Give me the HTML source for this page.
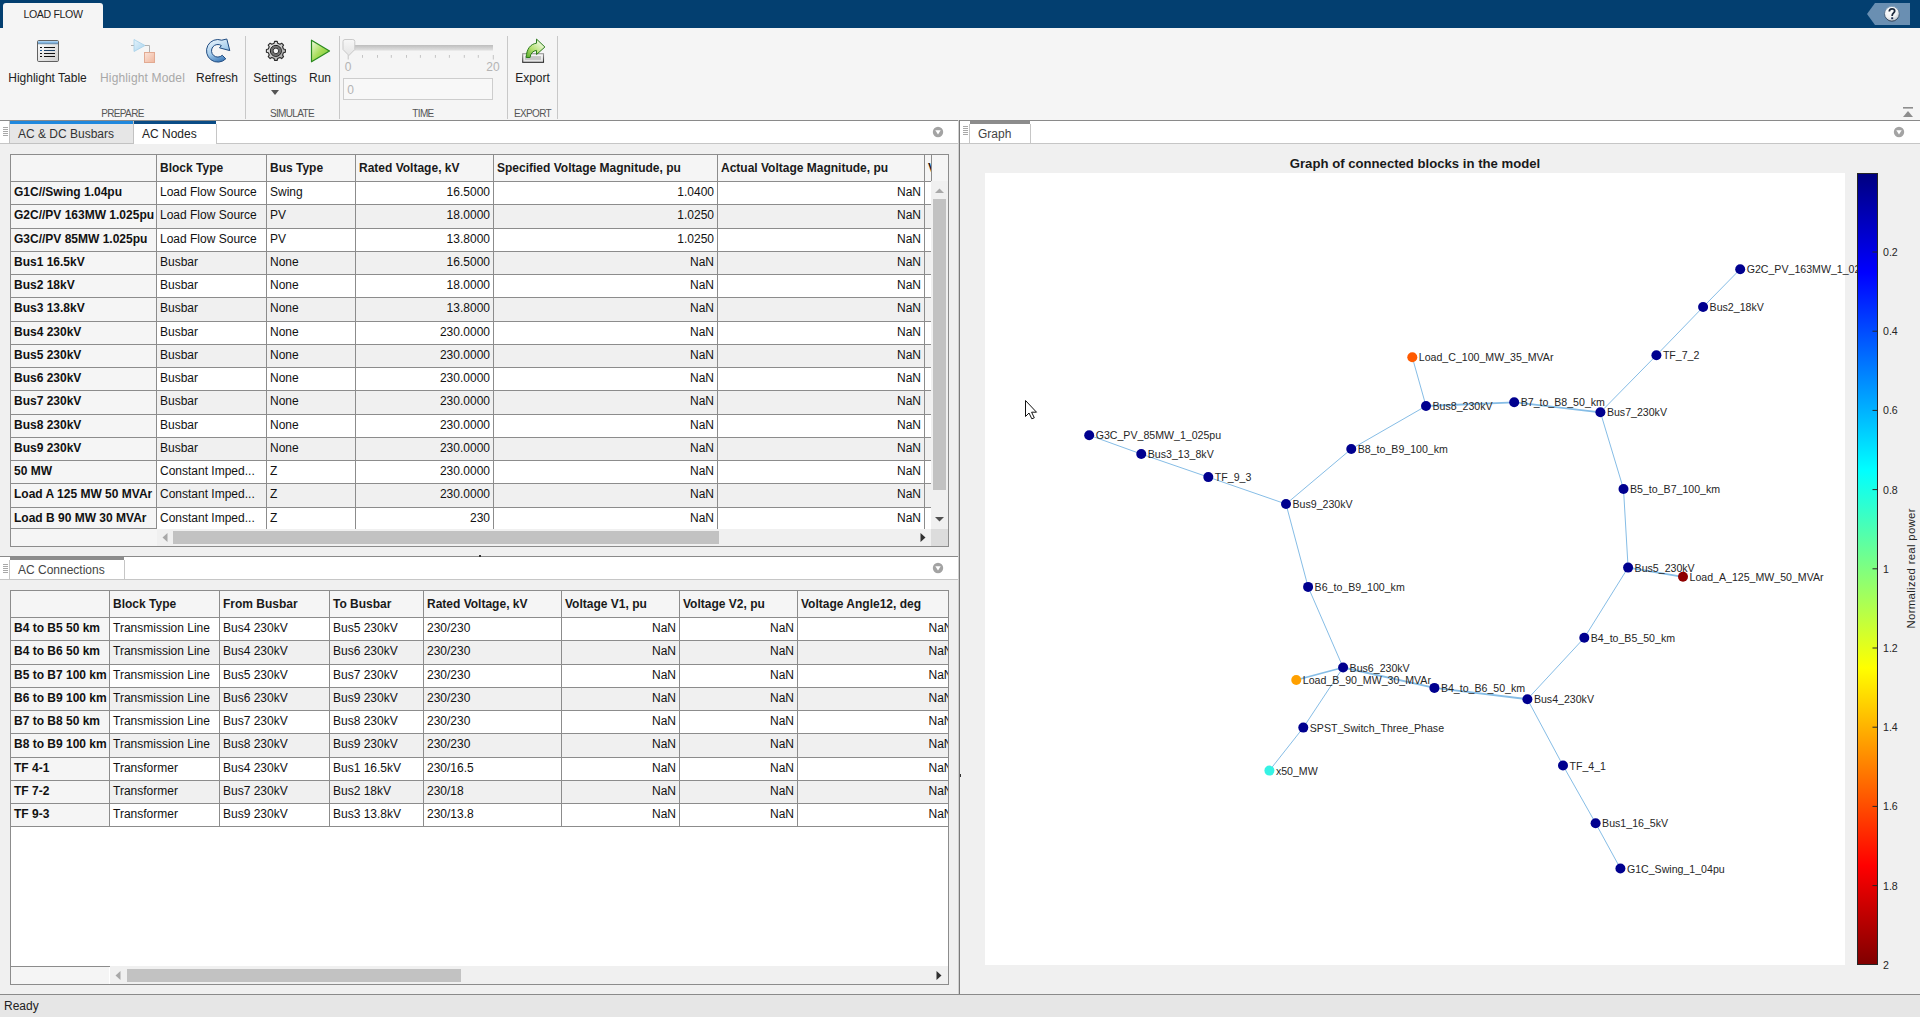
<!DOCTYPE html><html><head><meta charset="utf-8"><style>
html,body{margin:0;padding:0}
body{width:1920px;height:1017px;overflow:hidden;position:relative;background:#f0f0f0;font-family:"Liberation Sans",sans-serif}
.t{position:absolute;white-space:nowrap}
.r{position:absolute}
svg{position:absolute}
</style></head><body>

<div class="r" style="left:0px;top:0px;width:1920px;height:28px;background:#033f70;"></div>
<div class="r" style="left:3px;top:3px;width:100px;height:25px;background:#f5f5f5;border-radius:3px 3px 0 0"></div>
<div class="t" style="left:-247px;width:600px;text-align:center;top:9.03px;font-size:10.6px;line-height:10.6px;font-weight:400;color:#1e1e1e;letter-spacing:-0.35px">LOAD FLOW</div>
<svg style="left:1860px;top:0px" width="60" height="28">
<polygon points="7,14 15,3 50,3 50,25 15,25" fill="#6a8fb2"/>
<defs><radialGradient id="hg" cx="0.4" cy="0.3" r="0.75"><stop offset="0" stop-color="#ffffff"/><stop offset="0.6" stop-color="#f0f2f4"/><stop offset="1" stop-color="#b8c0c8"/></radialGradient>
<linearGradient id="hs" x1="0" y1="0" x2="0" y2="1"><stop offset="0" stop-color="#7a9ab8"/><stop offset="1" stop-color="#1e2e44"/></linearGradient></defs>
<circle cx="31.9" cy="13.75" r="7.4" fill="url(#hg)" stroke="url(#hs)" stroke-width="0.9"/>
<path d="M29.3,11.6 C29.3,9.6 30.6,8.9 32,8.9 C33.6,8.9 34.7,9.8 34.7,11.1 C34.7,12.6 32.3,13.2 32.2,15.3 L32.2,16" fill="none" stroke="#1e2a3c" stroke-width="1.75"/>
<rect x="31.2" y="17.3" width="2" height="1.9" fill="#1e3050"/>
</svg>
<div class="r" style="left:0px;top:28px;width:1920px;height:92px;background:#f5f5f5;"></div>
<div class="r" style="left:0px;top:120px;width:1920px;height:1px;background:#8a8a8a;"></div>
<div class="r" style="left:245px;top:36px;width:1px;height:83px;background:#c8c8c8;"></div>
<div class="r" style="left:339px;top:36px;width:1px;height:83px;background:#c8c8c8;"></div>
<div class="r" style="left:507px;top:36px;width:1px;height:83px;background:#c8c8c8;"></div>
<div class="r" style="left:557px;top:36px;width:1px;height:83px;background:#c8c8c8;"></div>
<div class="t" style="left:-252.5px;width:600px;text-align:center;top:71.84px;font-size:12px;line-height:12px;font-weight:400;color:#222;">Highlight Table</div>
<div class="t" style="left:-157.5px;width:600px;text-align:center;top:71.84px;font-size:12px;line-height:12px;font-weight:400;color:#a8a8a8;letter-spacing:0.15px">Highlight Model</div>
<div class="t" style="left:-83px;width:600px;text-align:center;top:71.84px;font-size:12px;line-height:12px;font-weight:400;color:#222;">Refresh</div>
<div class="t" style="left:-25px;width:600px;text-align:center;top:71.84px;font-size:12px;line-height:12px;font-weight:400;color:#222;">Settings</div>
<div class="t" style="left:20px;width:600px;text-align:center;top:71.84px;font-size:12px;line-height:12px;font-weight:400;color:#222;">Run</div>
<div class="t" style="left:232.5px;width:600px;text-align:center;top:71.84px;font-size:12px;line-height:12px;font-weight:400;color:#222;">Export</div>
<div class="t" style="left:-177.5px;width:600px;text-align:center;top:108.53px;font-size:10px;line-height:10px;font-weight:400;color:#555;letter-spacing:-0.65px">PREPARE</div>
<div class="t" style="left:-8px;width:600px;text-align:center;top:108.53px;font-size:10px;line-height:10px;font-weight:400;color:#555;letter-spacing:-0.65px">SIMULATE</div>
<div class="t" style="left:123px;width:600px;text-align:center;top:108.53px;font-size:10px;line-height:10px;font-weight:400;color:#555;letter-spacing:-0.65px">TIME</div>
<div class="t" style="left:232.5px;width:600px;text-align:center;top:108.53px;font-size:10px;line-height:10px;font-weight:400;color:#555;letter-spacing:-0.65px">EXPORT</div>
<svg style="left:270px;top:89px" width="10" height="8"><polygon points="1,1 9,1 5,6" fill="#555"/></svg>
<svg style="left:1900px;top:104px" width="16" height="16"><rect x="3" y="3" width="10" height="1.6" fill="#8e8e8e"/><polygon points="3,13 13,13 8,7" fill="#8e8e8e"/></svg>
<svg style="left:30px;top:32px" width="140" height="40">
<defs>
<linearGradient id="tb" x1="0" y1="0" x2="0" y2="1"><stop offset="0" stop-color="#b9dcf7"/><stop offset="1" stop-color="#5d9ad0"/></linearGradient>
<linearGradient id="bd" x1="0" y1="0" x2="1" y2="1"><stop offset="0" stop-color="#ffffff"/><stop offset="1" stop-color="#cfcfcf"/></linearGradient>
<linearGradient id="tri" x1="0" y1="0" x2="1" y2="1"><stop offset="0" stop-color="#e4f3fb"/><stop offset="1" stop-color="#a9d3ee"/></linearGradient>
<linearGradient id="sq" x1="0" y1="0" x2="1" y2="1"><stop offset="0" stop-color="#fbe3d8"/><stop offset="1" stop-color="#f0b79e"/></linearGradient>
</defs>
<rect x="7.5" y="8.5" width="21" height="21" rx="1.2" fill="url(#bd)" stroke="#505050" stroke-width="0.9"/>
<rect x="8" y="9" width="20" height="2.6" fill="url(#tb)"/>
<line x1="8" y1="11.8" x2="28" y2="11.8" stroke="#3d5f80" stroke-width="0.6"/>
<g stroke="#111" stroke-width="1">
<line x1="10" y1="15.5" x2="12" y2="15.5"/><line x1="14" y1="15.5" x2="25" y2="15.5"/>
<line x1="10" y1="18.5" x2="12" y2="18.5" stroke="#1a5a9a"/><line x1="14" y1="18.5" x2="25" y2="18.5" stroke="#1a3f66"/>
<line x1="10" y1="21.5" x2="12" y2="21.5"/><line x1="14" y1="21.5" x2="25" y2="21.5"/>
<line x1="10" y1="24.5" x2="12" y2="24.5"/><line x1="14" y1="24.5" x2="25" y2="24.5"/>
</g>
<line x1="101" y1="13.5" x2="104" y2="13.5" stroke="#b0b0b0" stroke-width="1"/>
<polyline points="115,13.5 119.5,13.5 119.5,20" fill="none" stroke="#b0b0b0" stroke-width="1"/>
<polygon points="104,7.5 115,13.5 104,19.5" fill="url(#tri)" stroke="#a3cfe9" stroke-width="0.8"/>
<rect x="114.5" y="20.5" width="10" height="10" fill="url(#sq)" stroke="#e2aa92" stroke-width="1"/>
</svg>
<svg style="left:200px;top:34px" width="36" height="32">
<defs><linearGradient id="rf" x1="0.2" y1="0" x2="0.6" y2="1"><stop offset="0" stop-color="#eef6fc"/><stop offset="0.55" stop-color="#a6cdec"/><stop offset="1" stop-color="#3a78b8"/></linearGradient></defs>
<path d="M21.7,6.2 A11.3,11.3 0 1 0 25.8,24.8 L22.25,21.25 A6.3,6.3 0 1 1 21.4,11.6 L19.5,13.8 L29.8,16.6 L26.8,5.0 Z" fill="url(#rf)" stroke="#1e4a80" stroke-width="1" stroke-linejoin="round"/>
</svg>
<svg style="left:262px;top:37px" width="28" height="28">
<defs><linearGradient id="gb" x1="0" y1="0" x2="1" y2="1"><stop offset="0" stop-color="#f2f2f2"/><stop offset="1" stop-color="#9c9c9c"/></linearGradient></defs>
<polygon points="12.08,6.32 12.55,4.40 15.25,4.40 15.72,6.32 17.98,7.25 19.66,6.22 21.58,8.14 20.55,9.82 21.48,12.08 23.40,12.55 23.40,15.25 21.48,15.72 20.55,17.98 21.58,19.66 19.66,21.58 17.98,20.55 15.72,21.48 15.25,23.40 12.55,23.40 12.08,21.48 9.82,20.55 8.14,21.58 6.22,19.66 7.25,17.98 6.32,15.72 4.40,15.25 4.40,12.55 6.32,12.08 7.25,9.82 6.22,8.14 8.14,6.22 9.82,7.25" fill="url(#gb)" stroke="#2a2a2a" stroke-width="1.1" stroke-linejoin="round"/>
<circle cx="13.9" cy="13.9" r="5.5" fill="#8c8c8c" stroke="#1a1a1a" stroke-width="1"/>
<circle cx="13.9" cy="13.9" r="4" fill="none" stroke="#5a5a5a" stroke-width="0.8"/>
<circle cx="13.9" cy="13.9" r="2.8" fill="#f6f6f6" stroke="#222" stroke-width="0.9"/>
</svg>
<svg style="left:306px;top:36px" width="30" height="30">
<defs><linearGradient id="rn" x1="0" y1="0" x2="1" y2="1"><stop offset="0" stop-color="#f2fbe4"/><stop offset="0.5" stop-color="#a9dd5a"/><stop offset="1" stop-color="#6cc22e"/></linearGradient></defs>
<polygon points="5.5,4.2 23.5,15 5.5,25.8" fill="url(#rn)" stroke="#2a8a1f" stroke-width="1.2" stroke-linejoin="round"/>
</svg>
<svg style="left:335px;top:0px" width="170" height="110">
<defs><linearGradient id="tr" x1="0" y1="0" x2="0" y2="1"><stop offset="0" stop-color="#bdbdbd"/><stop offset="1" stop-color="#e2e2e2"/></linearGradient>
<linearGradient id="th" x1="0" y1="0" x2="0" y2="1"><stop offset="0" stop-color="#f7f7f7"/><stop offset="1" stop-color="#e4e4e4"/></linearGradient></defs>
<rect x="13" y="45" width="145" height="5.6" fill="url(#tr)"/>
<line x1="13.2" y1="55" x2="13.2" y2="59.5" stroke="#c4c4c4" stroke-width="1"/><line x1="27.5" y1="55" x2="27.5" y2="57.8" stroke="#c4c4c4" stroke-width="1"/><line x1="42.5" y1="55" x2="42.5" y2="57.8" stroke="#c4c4c4" stroke-width="1"/><line x1="56.3" y1="55" x2="56.3" y2="57.8" stroke="#c4c4c4" stroke-width="1"/><line x1="71.5" y1="55" x2="71.5" y2="57.8" stroke="#c4c4c4" stroke-width="1"/><line x1="85.4" y1="55" x2="85.4" y2="57.8" stroke="#c4c4c4" stroke-width="1"/><line x1="100.4" y1="55" x2="100.4" y2="57.8" stroke="#c4c4c4" stroke-width="1"/><line x1="114.4" y1="55" x2="114.4" y2="57.8" stroke="#c4c4c4" stroke-width="1"/><line x1="129.3" y1="55" x2="129.3" y2="57.8" stroke="#c4c4c4" stroke-width="1"/><line x1="143.3" y1="55" x2="143.3" y2="57.8" stroke="#c4c4c4" stroke-width="1"/><line x1="158.3" y1="55" x2="158.3" y2="59.5" stroke="#c4c4c4" stroke-width="1"/>
<path d="M8,41.5 Q8,39.5 10,39.5 L17.8,39.5 Q19.8,39.5 19.8,41.5 L19.8,49.5 L13.9,55.5 L8,49.5 Z" fill="url(#th)" stroke="#c9c9c9" stroke-width="1"/>
<text x="13" y="71" text-anchor="middle" font-family="Liberation Sans" font-size="12" fill="#b4b4b4">0</text>
<text x="158" y="71" text-anchor="middle" font-family="Liberation Sans" font-size="12" fill="#b4b4b4">20</text>
<rect x="8.5" y="78.5" width="149" height="21" fill="#f8f8f8" stroke="#cdcdcd" stroke-width="1"/>
<text x="15.5" y="94" text-anchor="middle" font-family="Liberation Sans" font-size="12" fill="#b4b4b4">0</text>
</svg>
<svg style="left:515px;top:35px" width="36" height="32">
<defs><linearGradient id="ex" x1="0.1" y1="1" x2="0.8" y2="0.2"><stop offset="0" stop-color="#5fb030"/><stop offset="0.45" stop-color="#b4e070"/><stop offset="1" stop-color="#eef9dc"/></linearGradient>
<linearGradient id="ext" x1="0" y1="0" x2="0" y2="1"><stop offset="0" stop-color="#f8f8f8"/><stop offset="1" stop-color="#e0e0e0"/></linearGradient>
<linearGradient id="exs" x1="0" y1="0" x2="0" y2="1"><stop offset="0" stop-color="#9a9a9a"/><stop offset="1" stop-color="#2a2a2a"/></linearGradient></defs>
<rect x="7.7" y="18.7" width="20.8" height="8.6" fill="url(#ext)" stroke="url(#exs)" stroke-width="1.1"/>
<rect x="10" y="21.1" width="16" height="3.8" fill="#c6c6c6"/>
<path d="M21.55,4.1 L29.9,12 L21.55,19.5 L21.5,15.4 C18,15.8 15.3,18.5 15.1,22.5 L11.2,22.5 C11.5,14 15.5,9 21.5,8.2 Z" fill="url(#ex)" stroke="#2a7a1a" stroke-width="1" stroke-linejoin="miter"/>
</svg>
<div class="r" style="left:0px;top:121px;width:958px;height:23px;background:#ffffff;"></div>
<div class="r" style="left:0px;top:143px;width:958px;height:1px;background:#c6c6c6;"></div>
<div class="r" style="left:3px;top:127px;width:5px;height:1px;background:#a8a8a8;"></div><div class="r" style="left:3px;top:129px;width:5px;height:1px;background:#a8a8a8;"></div><div class="r" style="left:3px;top:131px;width:5px;height:1px;background:#a8a8a8;"></div><div class="r" style="left:3px;top:133px;width:5px;height:1px;background:#a8a8a8;"></div><div class="r" style="left:3px;top:135px;width:5px;height:1px;background:#a8a8a8;"></div>
<div class="r" style="left:9px;top:121px;width:125px;height:23px;background:#c2c2c2;"></div>
<div class="r" style="left:10px;top:121px;width:123px;height:22px;background:#e6e6e6;"></div>
<div class="r" style="left:10px;top:121px;width:123px;height:3px;background:#1f88dd;"></div>
<div class="t" style="left:18px;top:127.84px;font-size:12px;line-height:12px;font-weight:400;color:#333;">AC &amp; DC Busbars</div>
<div class="r" style="left:134px;top:121px;width:82px;height:23px;background:#ffffff;"></div>
<div class="r" style="left:134px;top:121px;width:82px;height:3px;background:#0a4c86;"></div>
<div class="r" style="left:216px;top:124px;width:1px;height:20px;background:#c6c6c6;"></div>
<div class="t" style="left:142px;top:127.84px;font-size:12px;line-height:12px;font-weight:400;color:#222;">AC Nodes</div>
<svg style="left:931px;top:125px" width="14" height="14"><circle cx="7" cy="7" r="5.2" fill="#a3a3a3"/><polygon points="4.3,5.3 9.7,5.3 7,9.6" fill="#fff"/></svg>
<div class="r" style="left:0px;top:556px;width:958px;height:1px;background:#8a8a8a;"></div>
<div class="r" style="left:0px;top:557px;width:958px;height:22px;background:#ffffff;"></div>
<div class="r" style="left:0px;top:579px;width:958px;height:1px;background:#c6c6c6;"></div>
<div class="r" style="left:3px;top:564px;width:5px;height:1px;background:#a8a8a8;"></div><div class="r" style="left:3px;top:566px;width:5px;height:1px;background:#a8a8a8;"></div><div class="r" style="left:3px;top:568px;width:5px;height:1px;background:#a8a8a8;"></div><div class="r" style="left:3px;top:570px;width:5px;height:1px;background:#a8a8a8;"></div><div class="r" style="left:3px;top:572px;width:5px;height:1px;background:#a8a8a8;"></div>
<div class="r" style="left:10px;top:557px;width:114px;height:3px;background:#8c8c8c;"></div>
<div class="r" style="left:124px;top:560px;width:1px;height:20px;background:#c6c6c6;"></div>
<div class="r" style="left:9px;top:560px;width:1px;height:20px;background:#c6c6c6;"></div>
<div class="t" style="left:18px;top:563.84px;font-size:12px;line-height:12px;font-weight:400;color:#444;">AC Connections</div>
<svg style="left:931px;top:561px" width="14" height="14"><circle cx="7" cy="7" r="5.2" fill="#a3a3a3"/><polygon points="4.3,5.3 9.7,5.3 7,9.6" fill="#fff"/></svg>
<div class="r" style="left:958px;top:120px;width:1px;height:874px;background:#d0d0d0;"></div>
<div class="r" style="left:959px;top:120px;width:1px;height:874px;background:#7a7a7a;"></div>
<div class="r" style="left:960px;top:121px;width:960px;height:22px;background:#ffffff;"></div>
<div class="r" style="left:960px;top:143px;width:960px;height:1px;background:#c6c6c6;"></div>
<div class="r" style="left:963px;top:126px;width:5px;height:1px;background:#a8a8a8;"></div><div class="r" style="left:963px;top:128px;width:5px;height:1px;background:#a8a8a8;"></div><div class="r" style="left:963px;top:130px;width:5px;height:1px;background:#a8a8a8;"></div><div class="r" style="left:963px;top:132px;width:5px;height:1px;background:#a8a8a8;"></div><div class="r" style="left:963px;top:134px;width:5px;height:1px;background:#a8a8a8;"></div>
<div class="r" style="left:970px;top:121px;width:60px;height:3px;background:#8c8c8c;"></div>
<div class="r" style="left:1030px;top:124px;width:1px;height:20px;background:#c6c6c6;"></div>
<div class="r" style="left:969px;top:124px;width:1px;height:20px;background:#c6c6c6;"></div>
<div class="t" style="left:978px;top:127.84px;font-size:12px;line-height:12px;font-weight:400;color:#444;">Graph</div>
<svg style="left:1892px;top:125px" width="14" height="14"><circle cx="7" cy="7" r="5.2" fill="#a3a3a3"/><polygon points="4.3,5.3 9.7,5.3 7,9.6" fill="#fff"/></svg>
<div class="r" style="left:479px;top:555px;width:2px;height:2px;background:#333;"></div>
<div class="r" style="left:960px;top:774px;width:1px;height:3px;background:#333;"></div>
<div class="r" style="left:0px;top:994px;width:1920px;height:1px;background:#8a8a8a;"></div>
<div class="r" style="left:0px;top:995px;width:1920px;height:22px;background:#e6e6e6;"></div>
<div class="t" style="left:4px;top:999.84px;font-size:12px;line-height:12px;font-weight:400;color:#222;">Ready</div>
<div class="r" style="left:0;top:0;width:1920px;height:1017px;clip-path:inset(154px 972px 471px 10px)">
<div class="r" style="left:10px;top:154px;width:938px;height:27px;background:#f5f5f5;"></div>
<div class="r" style="left:156px;top:181px;width:775px;height:23px;background:#ffffff;"></div>
<div class="r" style="left:10px;top:181px;width:146px;height:23px;background:#f5f5f5;"></div>
<div class="r" style="left:156px;top:204px;width:775px;height:24px;background:#f0f0f0;"></div>
<div class="r" style="left:10px;top:204px;width:146px;height:24px;background:#f5f5f5;"></div>
<div class="r" style="left:156px;top:228px;width:775px;height:23px;background:#ffffff;"></div>
<div class="r" style="left:10px;top:228px;width:146px;height:23px;background:#f5f5f5;"></div>
<div class="r" style="left:156px;top:251px;width:775px;height:23px;background:#f0f0f0;"></div>
<div class="r" style="left:10px;top:251px;width:146px;height:23px;background:#f5f5f5;"></div>
<div class="r" style="left:156px;top:274px;width:775px;height:23px;background:#ffffff;"></div>
<div class="r" style="left:10px;top:274px;width:146px;height:23px;background:#f5f5f5;"></div>
<div class="r" style="left:156px;top:297px;width:775px;height:24px;background:#f0f0f0;"></div>
<div class="r" style="left:10px;top:297px;width:146px;height:24px;background:#f5f5f5;"></div>
<div class="r" style="left:156px;top:321px;width:775px;height:23px;background:#ffffff;"></div>
<div class="r" style="left:10px;top:321px;width:146px;height:23px;background:#f5f5f5;"></div>
<div class="r" style="left:156px;top:344px;width:775px;height:23px;background:#f0f0f0;"></div>
<div class="r" style="left:10px;top:344px;width:146px;height:23px;background:#f5f5f5;"></div>
<div class="r" style="left:156px;top:367px;width:775px;height:23px;background:#ffffff;"></div>
<div class="r" style="left:10px;top:367px;width:146px;height:23px;background:#f5f5f5;"></div>
<div class="r" style="left:156px;top:390px;width:775px;height:24px;background:#f0f0f0;"></div>
<div class="r" style="left:10px;top:390px;width:146px;height:24px;background:#f5f5f5;"></div>
<div class="r" style="left:156px;top:414px;width:775px;height:23px;background:#ffffff;"></div>
<div class="r" style="left:10px;top:414px;width:146px;height:23px;background:#f5f5f5;"></div>
<div class="r" style="left:156px;top:437px;width:775px;height:23px;background:#f0f0f0;"></div>
<div class="r" style="left:10px;top:437px;width:146px;height:23px;background:#f5f5f5;"></div>
<div class="r" style="left:156px;top:460px;width:775px;height:23px;background:#ffffff;"></div>
<div class="r" style="left:10px;top:460px;width:146px;height:23px;background:#f5f5f5;"></div>
<div class="r" style="left:156px;top:483px;width:775px;height:24px;background:#f0f0f0;"></div>
<div class="r" style="left:10px;top:483px;width:146px;height:24px;background:#f5f5f5;"></div>
<div class="r" style="left:156px;top:507px;width:775px;height:22px;background:#ffffff;"></div>
<div class="r" style="left:10px;top:507px;width:146px;height:22px;background:#f5f5f5;"></div>
<div class="r" style="left:10px;top:204px;width:921px;height:1px;background:#8c8c8c;"></div>
<div class="r" style="left:10px;top:228px;width:921px;height:1px;background:#8c8c8c;"></div>
<div class="r" style="left:10px;top:251px;width:921px;height:1px;background:#8c8c8c;"></div>
<div class="r" style="left:10px;top:274px;width:921px;height:1px;background:#8c8c8c;"></div>
<div class="r" style="left:10px;top:297px;width:921px;height:1px;background:#8c8c8c;"></div>
<div class="r" style="left:10px;top:321px;width:921px;height:1px;background:#8c8c8c;"></div>
<div class="r" style="left:10px;top:344px;width:921px;height:1px;background:#8c8c8c;"></div>
<div class="r" style="left:10px;top:367px;width:921px;height:1px;background:#8c8c8c;"></div>
<div class="r" style="left:10px;top:390px;width:921px;height:1px;background:#8c8c8c;"></div>
<div class="r" style="left:10px;top:414px;width:921px;height:1px;background:#8c8c8c;"></div>
<div class="r" style="left:10px;top:437px;width:921px;height:1px;background:#8c8c8c;"></div>
<div class="r" style="left:10px;top:460px;width:921px;height:1px;background:#8c8c8c;"></div>
<div class="r" style="left:10px;top:483px;width:921px;height:1px;background:#8c8c8c;"></div>
<div class="r" style="left:10px;top:507px;width:921px;height:1px;background:#8c8c8c;"></div>
<div class="r" style="left:156px;top:154px;width:1px;height:375px;background:#8c8c8c;"></div>
<div class="r" style="left:266px;top:154px;width:1px;height:375px;background:#8c8c8c;"></div>
<div class="r" style="left:355px;top:154px;width:1px;height:375px;background:#8c8c8c;"></div>
<div class="r" style="left:493px;top:154px;width:1px;height:375px;background:#8c8c8c;"></div>
<div class="r" style="left:717px;top:154px;width:1px;height:375px;background:#8c8c8c;"></div>
<div class="r" style="left:924px;top:154px;width:1px;height:375px;background:#8c8c8c;"></div>
<div class="r" style="left:931px;top:154px;width:1px;height:27px;background:#8c8c8c;"></div>
<div class="r" style="left:10px;top:181px;width:921px;height:1px;background:#8c8c8c;"></div>
<div class="t" style="left:160px;top:161.84px;font-size:12px;line-height:12px;font-weight:700;color:#1a1a1a;">Block Type</div>
<div class="t" style="left:270px;top:161.84px;font-size:12px;line-height:12px;font-weight:700;color:#1a1a1a;">Bus Type</div>
<div class="t" style="left:359px;top:161.84px;font-size:12px;line-height:12px;font-weight:700;color:#1a1a1a;">Rated Voltage, kV</div>
<div class="t" style="left:497px;top:161.84px;font-size:12px;line-height:12px;font-weight:700;color:#1a1a1a;">Specified Voltage Magnitude, pu</div>
<div class="t" style="left:721px;top:161.84px;font-size:12px;line-height:12px;font-weight:700;color:#1a1a1a;">Actual Voltage Magnitude, pu</div>
<div class="t" style="left:928px;top:161.84px;font-size:12px;line-height:12px;font-weight:700;color:#1a1a1a;">V</div>
<div class="t" style="left:14px;top:185.84px;font-size:12px;line-height:12px;font-weight:700;color:#111;">G1C//Swing 1.04pu</div>
<div class="t" style="left:160px;top:185.84px;font-size:12px;line-height:12px;font-weight:400;color:#111;">Load Flow Source</div>
<div class="t" style="left:270px;top:185.84px;font-size:12px;line-height:12px;font-weight:400;color:#111;">Swing</div>
<div class="t" style="left:-110px;width:600px;text-align:right;top:185.84px;font-size:12px;line-height:12px;font-weight:400;color:#111;">16.5000</div>
<div class="t" style="left:114px;width:600px;text-align:right;top:185.84px;font-size:12px;line-height:12px;font-weight:400;color:#111;">1.0400</div>
<div class="t" style="left:321px;width:600px;text-align:right;top:185.84px;font-size:12px;line-height:12px;font-weight:400;color:#111;">NaN</div>
<div class="t" style="left:14px;top:208.84px;font-size:12px;line-height:12px;font-weight:700;color:#111;">G2C//PV 163MW 1.025pu</div>
<div class="t" style="left:160px;top:208.84px;font-size:12px;line-height:12px;font-weight:400;color:#111;">Load Flow Source</div>
<div class="t" style="left:270px;top:208.84px;font-size:12px;line-height:12px;font-weight:400;color:#111;">PV</div>
<div class="t" style="left:-110px;width:600px;text-align:right;top:208.84px;font-size:12px;line-height:12px;font-weight:400;color:#111;">18.0000</div>
<div class="t" style="left:114px;width:600px;text-align:right;top:208.84px;font-size:12px;line-height:12px;font-weight:400;color:#111;">1.0250</div>
<div class="t" style="left:321px;width:600px;text-align:right;top:208.84px;font-size:12px;line-height:12px;font-weight:400;color:#111;">NaN</div>
<div class="t" style="left:14px;top:232.84px;font-size:12px;line-height:12px;font-weight:700;color:#111;">G3C//PV 85MW 1.025pu</div>
<div class="t" style="left:160px;top:232.84px;font-size:12px;line-height:12px;font-weight:400;color:#111;">Load Flow Source</div>
<div class="t" style="left:270px;top:232.84px;font-size:12px;line-height:12px;font-weight:400;color:#111;">PV</div>
<div class="t" style="left:-110px;width:600px;text-align:right;top:232.84px;font-size:12px;line-height:12px;font-weight:400;color:#111;">13.8000</div>
<div class="t" style="left:114px;width:600px;text-align:right;top:232.84px;font-size:12px;line-height:12px;font-weight:400;color:#111;">1.0250</div>
<div class="t" style="left:321px;width:600px;text-align:right;top:232.84px;font-size:12px;line-height:12px;font-weight:400;color:#111;">NaN</div>
<div class="t" style="left:14px;top:255.84px;font-size:12px;line-height:12px;font-weight:700;color:#111;">Bus1 16.5kV</div>
<div class="t" style="left:160px;top:255.84px;font-size:12px;line-height:12px;font-weight:400;color:#111;">Busbar</div>
<div class="t" style="left:270px;top:255.84px;font-size:12px;line-height:12px;font-weight:400;color:#111;">None</div>
<div class="t" style="left:-110px;width:600px;text-align:right;top:255.84px;font-size:12px;line-height:12px;font-weight:400;color:#111;">16.5000</div>
<div class="t" style="left:114px;width:600px;text-align:right;top:255.84px;font-size:12px;line-height:12px;font-weight:400;color:#111;">NaN</div>
<div class="t" style="left:321px;width:600px;text-align:right;top:255.84px;font-size:12px;line-height:12px;font-weight:400;color:#111;">NaN</div>
<div class="t" style="left:14px;top:278.84px;font-size:12px;line-height:12px;font-weight:700;color:#111;">Bus2 18kV</div>
<div class="t" style="left:160px;top:278.84px;font-size:12px;line-height:12px;font-weight:400;color:#111;">Busbar</div>
<div class="t" style="left:270px;top:278.84px;font-size:12px;line-height:12px;font-weight:400;color:#111;">None</div>
<div class="t" style="left:-110px;width:600px;text-align:right;top:278.84px;font-size:12px;line-height:12px;font-weight:400;color:#111;">18.0000</div>
<div class="t" style="left:114px;width:600px;text-align:right;top:278.84px;font-size:12px;line-height:12px;font-weight:400;color:#111;">NaN</div>
<div class="t" style="left:321px;width:600px;text-align:right;top:278.84px;font-size:12px;line-height:12px;font-weight:400;color:#111;">NaN</div>
<div class="t" style="left:14px;top:301.84px;font-size:12px;line-height:12px;font-weight:700;color:#111;">Bus3 13.8kV</div>
<div class="t" style="left:160px;top:301.84px;font-size:12px;line-height:12px;font-weight:400;color:#111;">Busbar</div>
<div class="t" style="left:270px;top:301.84px;font-size:12px;line-height:12px;font-weight:400;color:#111;">None</div>
<div class="t" style="left:-110px;width:600px;text-align:right;top:301.84px;font-size:12px;line-height:12px;font-weight:400;color:#111;">13.8000</div>
<div class="t" style="left:114px;width:600px;text-align:right;top:301.84px;font-size:12px;line-height:12px;font-weight:400;color:#111;">NaN</div>
<div class="t" style="left:321px;width:600px;text-align:right;top:301.84px;font-size:12px;line-height:12px;font-weight:400;color:#111;">NaN</div>
<div class="t" style="left:14px;top:325.84px;font-size:12px;line-height:12px;font-weight:700;color:#111;">Bus4 230kV</div>
<div class="t" style="left:160px;top:325.84px;font-size:12px;line-height:12px;font-weight:400;color:#111;">Busbar</div>
<div class="t" style="left:270px;top:325.84px;font-size:12px;line-height:12px;font-weight:400;color:#111;">None</div>
<div class="t" style="left:-110px;width:600px;text-align:right;top:325.84px;font-size:12px;line-height:12px;font-weight:400;color:#111;">230.0000</div>
<div class="t" style="left:114px;width:600px;text-align:right;top:325.84px;font-size:12px;line-height:12px;font-weight:400;color:#111;">NaN</div>
<div class="t" style="left:321px;width:600px;text-align:right;top:325.84px;font-size:12px;line-height:12px;font-weight:400;color:#111;">NaN</div>
<div class="t" style="left:14px;top:348.84px;font-size:12px;line-height:12px;font-weight:700;color:#111;">Bus5 230kV</div>
<div class="t" style="left:160px;top:348.84px;font-size:12px;line-height:12px;font-weight:400;color:#111;">Busbar</div>
<div class="t" style="left:270px;top:348.84px;font-size:12px;line-height:12px;font-weight:400;color:#111;">None</div>
<div class="t" style="left:-110px;width:600px;text-align:right;top:348.84px;font-size:12px;line-height:12px;font-weight:400;color:#111;">230.0000</div>
<div class="t" style="left:114px;width:600px;text-align:right;top:348.84px;font-size:12px;line-height:12px;font-weight:400;color:#111;">NaN</div>
<div class="t" style="left:321px;width:600px;text-align:right;top:348.84px;font-size:12px;line-height:12px;font-weight:400;color:#111;">NaN</div>
<div class="t" style="left:14px;top:371.84px;font-size:12px;line-height:12px;font-weight:700;color:#111;">Bus6 230kV</div>
<div class="t" style="left:160px;top:371.84px;font-size:12px;line-height:12px;font-weight:400;color:#111;">Busbar</div>
<div class="t" style="left:270px;top:371.84px;font-size:12px;line-height:12px;font-weight:400;color:#111;">None</div>
<div class="t" style="left:-110px;width:600px;text-align:right;top:371.84px;font-size:12px;line-height:12px;font-weight:400;color:#111;">230.0000</div>
<div class="t" style="left:114px;width:600px;text-align:right;top:371.84px;font-size:12px;line-height:12px;font-weight:400;color:#111;">NaN</div>
<div class="t" style="left:321px;width:600px;text-align:right;top:371.84px;font-size:12px;line-height:12px;font-weight:400;color:#111;">NaN</div>
<div class="t" style="left:14px;top:394.84px;font-size:12px;line-height:12px;font-weight:700;color:#111;">Bus7 230kV</div>
<div class="t" style="left:160px;top:394.84px;font-size:12px;line-height:12px;font-weight:400;color:#111;">Busbar</div>
<div class="t" style="left:270px;top:394.84px;font-size:12px;line-height:12px;font-weight:400;color:#111;">None</div>
<div class="t" style="left:-110px;width:600px;text-align:right;top:394.84px;font-size:12px;line-height:12px;font-weight:400;color:#111;">230.0000</div>
<div class="t" style="left:114px;width:600px;text-align:right;top:394.84px;font-size:12px;line-height:12px;font-weight:400;color:#111;">NaN</div>
<div class="t" style="left:321px;width:600px;text-align:right;top:394.84px;font-size:12px;line-height:12px;font-weight:400;color:#111;">NaN</div>
<div class="t" style="left:14px;top:418.84px;font-size:12px;line-height:12px;font-weight:700;color:#111;">Bus8 230kV</div>
<div class="t" style="left:160px;top:418.84px;font-size:12px;line-height:12px;font-weight:400;color:#111;">Busbar</div>
<div class="t" style="left:270px;top:418.84px;font-size:12px;line-height:12px;font-weight:400;color:#111;">None</div>
<div class="t" style="left:-110px;width:600px;text-align:right;top:418.84px;font-size:12px;line-height:12px;font-weight:400;color:#111;">230.0000</div>
<div class="t" style="left:114px;width:600px;text-align:right;top:418.84px;font-size:12px;line-height:12px;font-weight:400;color:#111;">NaN</div>
<div class="t" style="left:321px;width:600px;text-align:right;top:418.84px;font-size:12px;line-height:12px;font-weight:400;color:#111;">NaN</div>
<div class="t" style="left:14px;top:441.84px;font-size:12px;line-height:12px;font-weight:700;color:#111;">Bus9 230kV</div>
<div class="t" style="left:160px;top:441.84px;font-size:12px;line-height:12px;font-weight:400;color:#111;">Busbar</div>
<div class="t" style="left:270px;top:441.84px;font-size:12px;line-height:12px;font-weight:400;color:#111;">None</div>
<div class="t" style="left:-110px;width:600px;text-align:right;top:441.84px;font-size:12px;line-height:12px;font-weight:400;color:#111;">230.0000</div>
<div class="t" style="left:114px;width:600px;text-align:right;top:441.84px;font-size:12px;line-height:12px;font-weight:400;color:#111;">NaN</div>
<div class="t" style="left:321px;width:600px;text-align:right;top:441.84px;font-size:12px;line-height:12px;font-weight:400;color:#111;">NaN</div>
<div class="t" style="left:14px;top:464.84px;font-size:12px;line-height:12px;font-weight:700;color:#111;">50 MW</div>
<div class="t" style="left:160px;top:464.84px;font-size:12px;line-height:12px;font-weight:400;color:#111;">Constant Imped...</div>
<div class="t" style="left:270px;top:464.84px;font-size:12px;line-height:12px;font-weight:400;color:#111;">Z</div>
<div class="t" style="left:-110px;width:600px;text-align:right;top:464.84px;font-size:12px;line-height:12px;font-weight:400;color:#111;">230.0000</div>
<div class="t" style="left:114px;width:600px;text-align:right;top:464.84px;font-size:12px;line-height:12px;font-weight:400;color:#111;">NaN</div>
<div class="t" style="left:321px;width:600px;text-align:right;top:464.84px;font-size:12px;line-height:12px;font-weight:400;color:#111;">NaN</div>
<div class="t" style="left:14px;top:487.84px;font-size:12px;line-height:12px;font-weight:700;color:#111;">Load A 125 MW 50 MVAr</div>
<div class="t" style="left:160px;top:487.84px;font-size:12px;line-height:12px;font-weight:400;color:#111;">Constant Imped...</div>
<div class="t" style="left:270px;top:487.84px;font-size:12px;line-height:12px;font-weight:400;color:#111;">Z</div>
<div class="t" style="left:-110px;width:600px;text-align:right;top:487.84px;font-size:12px;line-height:12px;font-weight:400;color:#111;">230.0000</div>
<div class="t" style="left:114px;width:600px;text-align:right;top:487.84px;font-size:12px;line-height:12px;font-weight:400;color:#111;">NaN</div>
<div class="t" style="left:321px;width:600px;text-align:right;top:487.84px;font-size:12px;line-height:12px;font-weight:400;color:#111;">NaN</div>
<div class="t" style="left:14px;top:511.84px;font-size:12px;line-height:12px;font-weight:700;color:#111;">Load B 90 MW 30 MVAr</div>
<div class="t" style="left:160px;top:511.84px;font-size:12px;line-height:12px;font-weight:400;color:#111;">Constant Imped...</div>
<div class="t" style="left:270px;top:511.84px;font-size:12px;line-height:12px;font-weight:400;color:#111;">Z</div>
<div class="t" style="left:-110px;width:600px;text-align:right;top:511.84px;font-size:12px;line-height:12px;font-weight:400;color:#111;">230</div>
<div class="t" style="left:114px;width:600px;text-align:right;top:511.84px;font-size:12px;line-height:12px;font-weight:400;color:#111;">NaN</div>
<div class="t" style="left:321px;width:600px;text-align:right;top:511.84px;font-size:12px;line-height:12px;font-weight:400;color:#111;">NaN</div>
<div class="r" style="left:931px;top:155px;width:17px;height:26px;background:#f5f5f5;"></div>
<div class="r" style="left:931px;top:154px;width:1px;height:27px;background:#8c8c8c;"></div>
<div class="r" style="left:931px;top:182px;width:17px;height:347px;background:#f0f0f0;"></div>
<div class="r" style="left:933px;top:199px;width:13px;height:291px;background:#c2c2c2;"></div>
<svg style="left:934px;top:187px" width="11" height="8"><polygon points="1,6 10,6 5.5,1.5" fill="#a8a8a8"/></svg>
<svg style="left:934px;top:515px" width="11" height="8"><polygon points="1,2 10,2 5.5,6.5" fill="#505050"/></svg>
<div class="r" style="left:10px;top:529px;width:147px;height:17px;background:#f5f5f5;"></div>
<div class="r" style="left:157px;top:529px;width:774px;height:17px;background:#f0f0f0;"></div>
<div class="r" style="left:173px;top:531px;width:546px;height:13px;background:#c2c2c2;"></div>
<svg style="left:160px;top:532px" width="10" height="12"><polygon points="7.5,1 7.5,10 2.5,5.5" fill="#a8a8a8"/></svg>
<svg style="left:918px;top:532px" width="10" height="12"><polygon points="2.5,1 2.5,10 7.5,5.5" fill="#303030"/></svg>
<div class="r" style="left:931px;top:529px;width:17px;height:17px;background:#dcdcdc;"></div>
<div class="r" style="left:10px;top:528px;width:147px;height:1px;background:#8c8c8c;"></div>
</div>
<div class="r" style="left:10px;top:154px;width:939px;height:1px;background:#8c8c8c;"></div>
<div class="r" style="left:10px;top:546px;width:939px;height:1px;background:#8c8c8c;"></div>
<div class="r" style="left:10px;top:154px;width:1px;height:393px;background:#8c8c8c;"></div>
<div class="r" style="left:948px;top:154px;width:1px;height:393px;background:#8c8c8c;"></div>
<div class="r" style="left:0;top:0;width:1920px;height:1017px;clip-path:inset(590px 971px 32px 10px)">
<div class="r" style="left:10px;top:590px;width:938px;height:394px;background:#ffffff;"></div>
<div class="r" style="left:10px;top:590px;width:938px;height:27px;background:#f5f5f5;"></div>
<div class="r" style="left:109px;top:617px;width:839px;height:23px;background:#ffffff;"></div>
<div class="r" style="left:10px;top:617px;width:99px;height:23px;background:#f5f5f5;"></div>
<div class="r" style="left:109px;top:640px;width:839px;height:24px;background:#f0f0f0;"></div>
<div class="r" style="left:10px;top:640px;width:99px;height:24px;background:#f5f5f5;"></div>
<div class="r" style="left:109px;top:664px;width:839px;height:23px;background:#ffffff;"></div>
<div class="r" style="left:10px;top:664px;width:99px;height:23px;background:#f5f5f5;"></div>
<div class="r" style="left:109px;top:687px;width:839px;height:23px;background:#f0f0f0;"></div>
<div class="r" style="left:10px;top:687px;width:99px;height:23px;background:#f5f5f5;"></div>
<div class="r" style="left:109px;top:710px;width:839px;height:23px;background:#ffffff;"></div>
<div class="r" style="left:10px;top:710px;width:99px;height:23px;background:#f5f5f5;"></div>
<div class="r" style="left:109px;top:733px;width:839px;height:24px;background:#f0f0f0;"></div>
<div class="r" style="left:10px;top:733px;width:99px;height:24px;background:#f5f5f5;"></div>
<div class="r" style="left:109px;top:757px;width:839px;height:23px;background:#ffffff;"></div>
<div class="r" style="left:10px;top:757px;width:99px;height:23px;background:#f5f5f5;"></div>
<div class="r" style="left:109px;top:780px;width:839px;height:23px;background:#f0f0f0;"></div>
<div class="r" style="left:10px;top:780px;width:99px;height:23px;background:#f5f5f5;"></div>
<div class="r" style="left:109px;top:803px;width:839px;height:23px;background:#ffffff;"></div>
<div class="r" style="left:10px;top:803px;width:99px;height:23px;background:#f5f5f5;"></div>
<div class="r" style="left:10px;top:640px;width:938px;height:1px;background:#8c8c8c;"></div>
<div class="r" style="left:10px;top:664px;width:938px;height:1px;background:#8c8c8c;"></div>
<div class="r" style="left:10px;top:687px;width:938px;height:1px;background:#8c8c8c;"></div>
<div class="r" style="left:10px;top:710px;width:938px;height:1px;background:#8c8c8c;"></div>
<div class="r" style="left:10px;top:733px;width:938px;height:1px;background:#8c8c8c;"></div>
<div class="r" style="left:10px;top:757px;width:938px;height:1px;background:#8c8c8c;"></div>
<div class="r" style="left:10px;top:780px;width:938px;height:1px;background:#8c8c8c;"></div>
<div class="r" style="left:10px;top:803px;width:938px;height:1px;background:#8c8c8c;"></div>
<div class="r" style="left:10px;top:826px;width:938px;height:1px;background:#8c8c8c;"></div>
<div class="r" style="left:109px;top:590px;width:1px;height:236px;background:#8c8c8c;"></div>
<div class="r" style="left:219px;top:590px;width:1px;height:236px;background:#8c8c8c;"></div>
<div class="r" style="left:329px;top:590px;width:1px;height:236px;background:#8c8c8c;"></div>
<div class="r" style="left:423px;top:590px;width:1px;height:236px;background:#8c8c8c;"></div>
<div class="r" style="left:561px;top:590px;width:1px;height:236px;background:#8c8c8c;"></div>
<div class="r" style="left:679px;top:590px;width:1px;height:236px;background:#8c8c8c;"></div>
<div class="r" style="left:797px;top:590px;width:1px;height:236px;background:#8c8c8c;"></div>
<div class="r" style="left:10px;top:617px;width:938px;height:1px;background:#8c8c8c;"></div>
<div class="t" style="left:113px;top:597.84px;font-size:12px;line-height:12px;font-weight:700;color:#1a1a1a;">Block Type</div>
<div class="t" style="left:223px;top:597.84px;font-size:12px;line-height:12px;font-weight:700;color:#1a1a1a;">From Busbar</div>
<div class="t" style="left:333px;top:597.84px;font-size:12px;line-height:12px;font-weight:700;color:#1a1a1a;">To Busbar</div>
<div class="t" style="left:427px;top:597.84px;font-size:12px;line-height:12px;font-weight:700;color:#1a1a1a;">Rated Voltage, kV</div>
<div class="t" style="left:565px;top:597.84px;font-size:12px;line-height:12px;font-weight:700;color:#1a1a1a;">Voltage V1, pu</div>
<div class="t" style="left:683px;top:597.84px;font-size:12px;line-height:12px;font-weight:700;color:#1a1a1a;">Voltage V2, pu</div>
<div class="t" style="left:801px;top:597.84px;font-size:12px;line-height:12px;font-weight:700;color:#1a1a1a;">Voltage Angle12, deg</div>
<div class="t" style="left:14px;top:621.84px;font-size:12px;line-height:12px;font-weight:700;color:#111;">B4 to B5 50 km</div>
<div class="t" style="left:113px;top:621.84px;font-size:12px;line-height:12px;font-weight:400;color:#111;">Transmission Line</div>
<div class="t" style="left:223px;top:621.84px;font-size:12px;line-height:12px;font-weight:400;color:#111;">Bus4 230kV</div>
<div class="t" style="left:333px;top:621.84px;font-size:12px;line-height:12px;font-weight:400;color:#111;">Bus5 230kV</div>
<div class="t" style="left:427px;top:621.84px;font-size:12px;line-height:12px;font-weight:400;color:#111;">230/230</div>
<div class="t" style="left:76px;width:600px;text-align:right;top:621.84px;font-size:12px;line-height:12px;font-weight:400;color:#111;">NaN</div>
<div class="t" style="left:194px;width:600px;text-align:right;top:621.84px;font-size:12px;line-height:12px;font-weight:400;color:#111;">NaN</div>
<div class="t" style="left:352.5px;width:600px;text-align:right;top:621.84px;font-size:12px;line-height:12px;font-weight:400;color:#111;">NaN</div>
<div class="t" style="left:14px;top:644.84px;font-size:12px;line-height:12px;font-weight:700;color:#111;">B4 to B6 50 km</div>
<div class="t" style="left:113px;top:644.84px;font-size:12px;line-height:12px;font-weight:400;color:#111;">Transmission Line</div>
<div class="t" style="left:223px;top:644.84px;font-size:12px;line-height:12px;font-weight:400;color:#111;">Bus4 230kV</div>
<div class="t" style="left:333px;top:644.84px;font-size:12px;line-height:12px;font-weight:400;color:#111;">Bus6 230kV</div>
<div class="t" style="left:427px;top:644.84px;font-size:12px;line-height:12px;font-weight:400;color:#111;">230/230</div>
<div class="t" style="left:76px;width:600px;text-align:right;top:644.84px;font-size:12px;line-height:12px;font-weight:400;color:#111;">NaN</div>
<div class="t" style="left:194px;width:600px;text-align:right;top:644.84px;font-size:12px;line-height:12px;font-weight:400;color:#111;">NaN</div>
<div class="t" style="left:352.5px;width:600px;text-align:right;top:644.84px;font-size:12px;line-height:12px;font-weight:400;color:#111;">NaN</div>
<div class="t" style="left:14px;top:668.84px;font-size:12px;line-height:12px;font-weight:700;color:#111;">B5 to B7 100 km</div>
<div class="t" style="left:113px;top:668.84px;font-size:12px;line-height:12px;font-weight:400;color:#111;">Transmission Line</div>
<div class="t" style="left:223px;top:668.84px;font-size:12px;line-height:12px;font-weight:400;color:#111;">Bus5 230kV</div>
<div class="t" style="left:333px;top:668.84px;font-size:12px;line-height:12px;font-weight:400;color:#111;">Bus7 230kV</div>
<div class="t" style="left:427px;top:668.84px;font-size:12px;line-height:12px;font-weight:400;color:#111;">230/230</div>
<div class="t" style="left:76px;width:600px;text-align:right;top:668.84px;font-size:12px;line-height:12px;font-weight:400;color:#111;">NaN</div>
<div class="t" style="left:194px;width:600px;text-align:right;top:668.84px;font-size:12px;line-height:12px;font-weight:400;color:#111;">NaN</div>
<div class="t" style="left:352.5px;width:600px;text-align:right;top:668.84px;font-size:12px;line-height:12px;font-weight:400;color:#111;">NaN</div>
<div class="t" style="left:14px;top:691.84px;font-size:12px;line-height:12px;font-weight:700;color:#111;">B6 to B9 100 km</div>
<div class="t" style="left:113px;top:691.84px;font-size:12px;line-height:12px;font-weight:400;color:#111;">Transmission Line</div>
<div class="t" style="left:223px;top:691.84px;font-size:12px;line-height:12px;font-weight:400;color:#111;">Bus6 230kV</div>
<div class="t" style="left:333px;top:691.84px;font-size:12px;line-height:12px;font-weight:400;color:#111;">Bus9 230kV</div>
<div class="t" style="left:427px;top:691.84px;font-size:12px;line-height:12px;font-weight:400;color:#111;">230/230</div>
<div class="t" style="left:76px;width:600px;text-align:right;top:691.84px;font-size:12px;line-height:12px;font-weight:400;color:#111;">NaN</div>
<div class="t" style="left:194px;width:600px;text-align:right;top:691.84px;font-size:12px;line-height:12px;font-weight:400;color:#111;">NaN</div>
<div class="t" style="left:352.5px;width:600px;text-align:right;top:691.84px;font-size:12px;line-height:12px;font-weight:400;color:#111;">NaN</div>
<div class="t" style="left:14px;top:714.84px;font-size:12px;line-height:12px;font-weight:700;color:#111;">B7 to B8 50 km</div>
<div class="t" style="left:113px;top:714.84px;font-size:12px;line-height:12px;font-weight:400;color:#111;">Transmission Line</div>
<div class="t" style="left:223px;top:714.84px;font-size:12px;line-height:12px;font-weight:400;color:#111;">Bus7 230kV</div>
<div class="t" style="left:333px;top:714.84px;font-size:12px;line-height:12px;font-weight:400;color:#111;">Bus8 230kV</div>
<div class="t" style="left:427px;top:714.84px;font-size:12px;line-height:12px;font-weight:400;color:#111;">230/230</div>
<div class="t" style="left:76px;width:600px;text-align:right;top:714.84px;font-size:12px;line-height:12px;font-weight:400;color:#111;">NaN</div>
<div class="t" style="left:194px;width:600px;text-align:right;top:714.84px;font-size:12px;line-height:12px;font-weight:400;color:#111;">NaN</div>
<div class="t" style="left:352.5px;width:600px;text-align:right;top:714.84px;font-size:12px;line-height:12px;font-weight:400;color:#111;">NaN</div>
<div class="t" style="left:14px;top:737.84px;font-size:12px;line-height:12px;font-weight:700;color:#111;">B8 to B9 100 km</div>
<div class="t" style="left:113px;top:737.84px;font-size:12px;line-height:12px;font-weight:400;color:#111;">Transmission Line</div>
<div class="t" style="left:223px;top:737.84px;font-size:12px;line-height:12px;font-weight:400;color:#111;">Bus8 230kV</div>
<div class="t" style="left:333px;top:737.84px;font-size:12px;line-height:12px;font-weight:400;color:#111;">Bus9 230kV</div>
<div class="t" style="left:427px;top:737.84px;font-size:12px;line-height:12px;font-weight:400;color:#111;">230/230</div>
<div class="t" style="left:76px;width:600px;text-align:right;top:737.84px;font-size:12px;line-height:12px;font-weight:400;color:#111;">NaN</div>
<div class="t" style="left:194px;width:600px;text-align:right;top:737.84px;font-size:12px;line-height:12px;font-weight:400;color:#111;">NaN</div>
<div class="t" style="left:352.5px;width:600px;text-align:right;top:737.84px;font-size:12px;line-height:12px;font-weight:400;color:#111;">NaN</div>
<div class="t" style="left:14px;top:761.84px;font-size:12px;line-height:12px;font-weight:700;color:#111;">TF 4-1</div>
<div class="t" style="left:113px;top:761.84px;font-size:12px;line-height:12px;font-weight:400;color:#111;">Transformer</div>
<div class="t" style="left:223px;top:761.84px;font-size:12px;line-height:12px;font-weight:400;color:#111;">Bus4 230kV</div>
<div class="t" style="left:333px;top:761.84px;font-size:12px;line-height:12px;font-weight:400;color:#111;">Bus1 16.5kV</div>
<div class="t" style="left:427px;top:761.84px;font-size:12px;line-height:12px;font-weight:400;color:#111;">230/16.5</div>
<div class="t" style="left:76px;width:600px;text-align:right;top:761.84px;font-size:12px;line-height:12px;font-weight:400;color:#111;">NaN</div>
<div class="t" style="left:194px;width:600px;text-align:right;top:761.84px;font-size:12px;line-height:12px;font-weight:400;color:#111;">NaN</div>
<div class="t" style="left:352.5px;width:600px;text-align:right;top:761.84px;font-size:12px;line-height:12px;font-weight:400;color:#111;">NaN</div>
<div class="t" style="left:14px;top:784.84px;font-size:12px;line-height:12px;font-weight:700;color:#111;">TF 7-2</div>
<div class="t" style="left:113px;top:784.84px;font-size:12px;line-height:12px;font-weight:400;color:#111;">Transformer</div>
<div class="t" style="left:223px;top:784.84px;font-size:12px;line-height:12px;font-weight:400;color:#111;">Bus7 230kV</div>
<div class="t" style="left:333px;top:784.84px;font-size:12px;line-height:12px;font-weight:400;color:#111;">Bus2 18kV</div>
<div class="t" style="left:427px;top:784.84px;font-size:12px;line-height:12px;font-weight:400;color:#111;">230/18</div>
<div class="t" style="left:76px;width:600px;text-align:right;top:784.84px;font-size:12px;line-height:12px;font-weight:400;color:#111;">NaN</div>
<div class="t" style="left:194px;width:600px;text-align:right;top:784.84px;font-size:12px;line-height:12px;font-weight:400;color:#111;">NaN</div>
<div class="t" style="left:352.5px;width:600px;text-align:right;top:784.84px;font-size:12px;line-height:12px;font-weight:400;color:#111;">NaN</div>
<div class="t" style="left:14px;top:807.84px;font-size:12px;line-height:12px;font-weight:700;color:#111;">TF 9-3</div>
<div class="t" style="left:113px;top:807.84px;font-size:12px;line-height:12px;font-weight:400;color:#111;">Transformer</div>
<div class="t" style="left:223px;top:807.84px;font-size:12px;line-height:12px;font-weight:400;color:#111;">Bus9 230kV</div>
<div class="t" style="left:333px;top:807.84px;font-size:12px;line-height:12px;font-weight:400;color:#111;">Bus3 13.8kV</div>
<div class="t" style="left:427px;top:807.84px;font-size:12px;line-height:12px;font-weight:400;color:#111;">230/13.8</div>
<div class="t" style="left:76px;width:600px;text-align:right;top:807.84px;font-size:12px;line-height:12px;font-weight:400;color:#111;">NaN</div>
<div class="t" style="left:194px;width:600px;text-align:right;top:807.84px;font-size:12px;line-height:12px;font-weight:400;color:#111;">NaN</div>
<div class="t" style="left:352.5px;width:600px;text-align:right;top:807.84px;font-size:12px;line-height:12px;font-weight:400;color:#111;">NaN</div>
<div class="r" style="left:10px;top:967px;width:99px;height:17px;background:#f5f5f5;"></div>
<div class="r" style="left:10px;top:966px;width:100px;height:1px;background:#8c8c8c;"></div>
<div class="r" style="left:110px;top:966px;width:838px;height:18px;background:#f0f0f0;"></div>
<div class="r" style="left:127px;top:969px;width:334px;height:13px;background:#c2c2c2;"></div>
<svg style="left:113px;top:970px" width="10" height="12"><polygon points="7.5,1 7.5,10 2.5,5.5" fill="#a8a8a8"/></svg>
<svg style="left:934px;top:970px" width="10" height="12"><polygon points="2.5,1 2.5,10 7.5,5.5" fill="#303030"/></svg>
</div>
<div class="r" style="left:10px;top:590px;width:939px;height:1px;background:#8c8c8c;"></div>
<div class="r" style="left:10px;top:984px;width:939px;height:1px;background:#8c8c8c;"></div>
<div class="r" style="left:10px;top:590px;width:1px;height:395px;background:#8c8c8c;"></div>
<div class="r" style="left:948px;top:590px;width:1px;height:395px;background:#8c8c8c;"></div>
<div class="r" style="left:985px;top:173px;width:860px;height:792px;background:#ffffff;"></div>
<div class="t" style="left:1115px;width:600px;text-align:center;top:156.87px;font-size:13.15px;line-height:13.15px;font-weight:700;color:#1a1a1a;">Graph of connected blocks in the model</div>
<svg style="left:0;top:0" width="1920" height="1017"><defs><clipPath id="ax"><rect x="985" y="150" width="935" height="815"/></clipPath><linearGradient id="jet" x1="0" y1="0" x2="0" y2="1"><stop offset="0" stop-color="#000080"/><stop offset="0.125" stop-color="#0000ff"/><stop offset="0.375" stop-color="#00ffff"/><stop offset="0.625" stop-color="#ffff00"/><stop offset="0.875" stop-color="#ff0000"/><stop offset="1" stop-color="#800000"/></linearGradient></defs><g clip-path="url(#ax)"><line x1="1089.2" y1="435.2" x2="1141.25" y2="454" stroke="#86bde6" stroke-width="1"/><line x1="1141.25" y1="454" x2="1208.3" y2="477.1" stroke="#86bde6" stroke-width="1"/><line x1="1208.3" y1="477.1" x2="1286" y2="504" stroke="#86bde6" stroke-width="1"/><line x1="1286" y1="504" x2="1351.25" y2="449" stroke="#86bde6" stroke-width="1"/><line x1="1351.25" y1="449" x2="1426" y2="406" stroke="#86bde6" stroke-width="1"/><line x1="1426" y1="406" x2="1412.3" y2="357.3" stroke="#86bde6" stroke-width="1"/><line x1="1426" y1="406" x2="1514.2" y2="402.3" stroke="#86bde6" stroke-width="1.8"/><line x1="1514.2" y1="402.3" x2="1600.4" y2="412.3" stroke="#86bde6" stroke-width="1.8"/><line x1="1600.4" y1="412.3" x2="1656.4" y2="355.3" stroke="#86bde6" stroke-width="1"/><line x1="1656.4" y1="355.3" x2="1703.1" y2="307" stroke="#86bde6" stroke-width="1"/><line x1="1703.1" y1="307" x2="1740.2" y2="269.2" stroke="#86bde6" stroke-width="1"/><line x1="1600.4" y1="412.3" x2="1623.5" y2="489" stroke="#86bde6" stroke-width="1"/><line x1="1623.5" y1="489" x2="1628.1" y2="567.6" stroke="#86bde6" stroke-width="1"/><line x1="1628.1" y1="567.6" x2="1683" y2="576.8" stroke="#86bde6" stroke-width="1.8"/><line x1="1628.1" y1="567.6" x2="1584.3" y2="637.8" stroke="#86bde6" stroke-width="1"/><line x1="1584.3" y1="637.8" x2="1527.4" y2="699.2" stroke="#86bde6" stroke-width="1"/><line x1="1527.4" y1="699.2" x2="1434.4" y2="687.9" stroke="#86bde6" stroke-width="1.8"/><line x1="1434.4" y1="687.9" x2="1343.1" y2="667.5" stroke="#86bde6" stroke-width="1.8"/><line x1="1343.1" y1="667.5" x2="1296.25" y2="680" stroke="#86bde6" stroke-width="1.8"/><line x1="1343.1" y1="667.5" x2="1303.3" y2="727.6" stroke="#86bde6" stroke-width="1"/><line x1="1303.3" y1="727.6" x2="1269.4" y2="770.6" stroke="#86bde6" stroke-width="1"/><line x1="1343.1" y1="667.5" x2="1308.1" y2="586.9" stroke="#86bde6" stroke-width="1"/><line x1="1308.1" y1="586.9" x2="1286" y2="504" stroke="#86bde6" stroke-width="1"/><line x1="1527.4" y1="699.2" x2="1563" y2="765.5" stroke="#86bde6" stroke-width="1"/><line x1="1563" y1="765.5" x2="1595.6" y2="823.2" stroke="#86bde6" stroke-width="1"/><line x1="1595.6" y1="823.2" x2="1620.4" y2="868.5" stroke="#86bde6" stroke-width="1"/><circle cx="1089.2" cy="435.2" r="5" fill="#00008f"/><circle cx="1141.25" cy="454" r="5" fill="#00008f"/><circle cx="1208.3" cy="477.1" r="5" fill="#00008f"/><circle cx="1286" cy="504" r="5" fill="#00008f"/><circle cx="1351.25" cy="449" r="5" fill="#00008f"/><circle cx="1426" cy="406" r="5" fill="#00008f"/><circle cx="1412.3" cy="357.3" r="5" fill="#ff5a00"/><circle cx="1514.2" cy="402.3" r="5" fill="#00008f"/><circle cx="1600.4" cy="412.3" r="5" fill="#00008f"/><circle cx="1656.4" cy="355.3" r="5" fill="#00008f"/><circle cx="1703.1" cy="307" r="5" fill="#00008f"/><circle cx="1740.2" cy="269.2" r="5" fill="#00008f"/><circle cx="1623.5" cy="489" r="5" fill="#00008f"/><circle cx="1628.1" cy="567.6" r="5" fill="#00008f"/><circle cx="1683" cy="576.8" r="5" fill="#8f0000"/><circle cx="1584.3" cy="637.8" r="5" fill="#00008f"/><circle cx="1527.4" cy="699.2" r="5" fill="#00008f"/><circle cx="1434.4" cy="687.9" r="5" fill="#00008f"/><circle cx="1343.1" cy="667.5" r="5" fill="#00008f"/><circle cx="1296.25" cy="680" r="5" fill="#ffa000"/><circle cx="1308.1" cy="586.9" r="5" fill="#00008f"/><circle cx="1303.3" cy="727.6" r="5" fill="#00008f"/><circle cx="1269.4" cy="770.6" r="5" fill="#36f2e4"/><circle cx="1563" cy="765.5" r="5" fill="#00008f"/><circle cx="1595.6" cy="823.2" r="5" fill="#00008f"/><circle cx="1620.4" cy="868.5" r="5" fill="#00008f"/><text x="1095.7" y="439.2" font-family="Liberation Sans" font-size="10.6" fill="#262626">G3C_PV_85MW_1_025pu</text><text x="1147.75" y="458" font-family="Liberation Sans" font-size="10.6" fill="#262626">Bus3_13_8kV</text><text x="1214.8" y="481.1" font-family="Liberation Sans" font-size="10.6" fill="#262626">TF_9_3</text><text x="1292.5" y="508" font-family="Liberation Sans" font-size="10.6" fill="#262626">Bus9_230kV</text><text x="1357.75" y="453" font-family="Liberation Sans" font-size="10.6" fill="#262626">B8_to_B9_100_km</text><text x="1432.5" y="410" font-family="Liberation Sans" font-size="10.6" fill="#262626">Bus8_230kV</text><text x="1418.8" y="361.3" font-family="Liberation Sans" font-size="10.6" fill="#262626">Load_C_100_MW_35_MVAr</text><text x="1520.7" y="406.3" font-family="Liberation Sans" font-size="10.6" fill="#262626">B7_to_B8_50_km</text><text x="1606.9" y="416.3" font-family="Liberation Sans" font-size="10.6" fill="#262626">Bus7_230kV</text><text x="1662.9" y="359.3" font-family="Liberation Sans" font-size="10.6" fill="#262626">TF_7_2</text><text x="1709.6" y="311" font-family="Liberation Sans" font-size="10.6" fill="#262626">Bus2_18kV</text><text x="1746.7" y="273.2" font-family="Liberation Sans" font-size="10.6" fill="#262626">G2C_PV_163MW_1_025pu</text><text x="1630.0" y="493" font-family="Liberation Sans" font-size="10.6" fill="#262626">B5_to_B7_100_km</text><text x="1634.6" y="571.6" font-family="Liberation Sans" font-size="10.6" fill="#262626">Bus5_230kV</text><text x="1689.5" y="580.8" font-family="Liberation Sans" font-size="10.6" fill="#262626">Load_A_125_MW_50_MVAr</text><text x="1590.8" y="641.8" font-family="Liberation Sans" font-size="10.6" fill="#262626">B4_to_B5_50_km</text><text x="1533.9" y="703.2" font-family="Liberation Sans" font-size="10.6" fill="#262626">Bus4_230kV</text><text x="1440.9" y="691.9" font-family="Liberation Sans" font-size="10.6" fill="#262626">B4_to_B6_50_km</text><text x="1349.6" y="671.5" font-family="Liberation Sans" font-size="10.6" fill="#262626">Bus6_230kV</text><text x="1302.75" y="684" font-family="Liberation Sans" font-size="10.6" fill="#262626">Load_B_90_MW_30_MVAr</text><text x="1314.6" y="590.9" font-family="Liberation Sans" font-size="10.6" fill="#262626">B6_to_B9_100_km</text><text x="1309.8" y="731.6" font-family="Liberation Sans" font-size="10.6" fill="#262626">SPST_Switch_Three_Phase</text><text x="1275.9" y="774.6" font-family="Liberation Sans" font-size="10.6" fill="#262626">x50_MW</text><text x="1569.5" y="769.5" font-family="Liberation Sans" font-size="10.6" fill="#262626">TF_4_1</text><text x="1602.1" y="827.2" font-family="Liberation Sans" font-size="10.6" fill="#262626">Bus1_16_5kV</text><text x="1626.9" y="872.5" font-family="Liberation Sans" font-size="10.6" fill="#262626">G1C_Swing_1_04pu</text></g><rect x="1857.5" y="173.5" width="20" height="791" fill="url(#jet)" stroke="#262626" stroke-width="1"/><line x1="1872.5" y1="252.0" x2="1877.5" y2="252.0" stroke="#262626" stroke-width="1"/><text x="1883" y="256.0" font-family="Liberation Sans" font-size="10.6" fill="#262626">0.2</text><line x1="1872.5" y1="331.2" x2="1877.5" y2="331.2" stroke="#262626" stroke-width="1"/><text x="1883" y="335.2" font-family="Liberation Sans" font-size="10.6" fill="#262626">0.4</text><line x1="1872.5" y1="410.4" x2="1877.5" y2="410.4" stroke="#262626" stroke-width="1"/><text x="1883" y="414.4" font-family="Liberation Sans" font-size="10.6" fill="#262626">0.6</text><line x1="1872.5" y1="489.6" x2="1877.5" y2="489.6" stroke="#262626" stroke-width="1"/><text x="1883" y="493.6" font-family="Liberation Sans" font-size="10.6" fill="#262626">0.8</text><line x1="1872.5" y1="568.8" x2="1877.5" y2="568.8" stroke="#262626" stroke-width="1"/><text x="1883" y="572.8" font-family="Liberation Sans" font-size="10.6" fill="#262626">1</text><line x1="1872.5" y1="648.0" x2="1877.5" y2="648.0" stroke="#262626" stroke-width="1"/><text x="1883" y="652.0" font-family="Liberation Sans" font-size="10.6" fill="#262626">1.2</text><line x1="1872.5" y1="727.2" x2="1877.5" y2="727.2" stroke="#262626" stroke-width="1"/><text x="1883" y="731.2" font-family="Liberation Sans" font-size="10.6" fill="#262626">1.4</text><line x1="1872.5" y1="806.4" x2="1877.5" y2="806.4" stroke="#262626" stroke-width="1"/><text x="1883" y="810.4" font-family="Liberation Sans" font-size="10.6" fill="#262626">1.6</text><line x1="1872.5" y1="885.6" x2="1877.5" y2="885.6" stroke="#262626" stroke-width="1"/><text x="1883" y="889.6" font-family="Liberation Sans" font-size="10.6" fill="#262626">1.8</text><text x="1883" y="968.8" font-family="Liberation Sans" font-size="10.6" fill="#262626">2</text><text transform="translate(1915,568.3) rotate(-90)" text-anchor="middle" font-family="Liberation Sans" font-size="11.4" letter-spacing="0.3" fill="#262626">Normalized real power</text><path d="M1025.5,400.5 L1025.5,416.5 L1029,413 L1031.8,418.8 L1034.3,417.8 L1031.6,412.2 L1036.5,412.2 Z" fill="#fff" stroke="#111" stroke-width="1" stroke-linejoin="round"/></svg>
</body></html>
